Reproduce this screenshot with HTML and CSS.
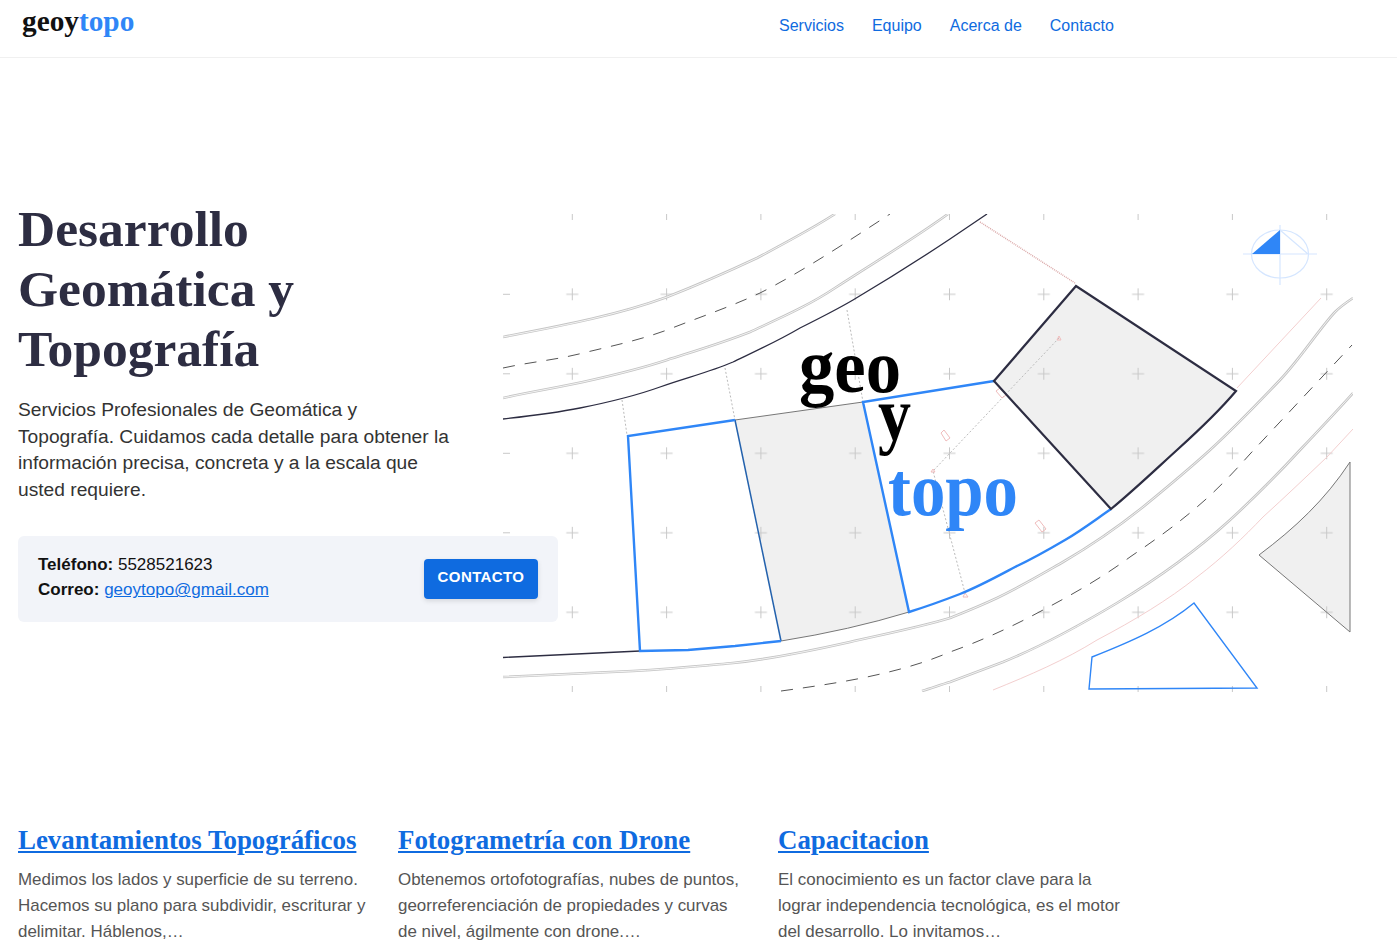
FILE: index.html
```html
<!DOCTYPE html>
<html>
<head>
    <title>geoytopo</title>
    <link rel="stylesheet" href="styles.css">
</head>
<body>
    <header class="header">
        <a class="logo" href="#">geoy<span class="logo-blue">topo</span></a>
        <nav class="nav">
            <a href="#">Servicios</a>
            <a href="#">Equipo</a>
            <a href="#">Acerca de</a>
            <a href="#">Contacto</a>
        </nav>
    </header>

    <section class="hero">
        <div class="hero-text">
            <h1>Desarrollo Geomática y Topografía</h1>
            <p class="lead">Servicios Profesionales de Geomática y Topografía. Cuidamos cada detalle para obtener la información precisa, concreta y a la escala que usted requiere.</p>
            <div class="contact-card">
                <div class="contact-info">
                    <div><b>Teléfono:</b> 5528521623</div>
                    <div><b>Correo:</b> <a href="#">geoytopo@gmail.com</a></div>
                </div>
                <a class="btn" href="#">CONTACTO</a>
            </div>
        </div>

        <svg class="plan" viewBox="503 214 850 478" width="850" height="478">
            <defs>
                <pattern id="crosses" patternUnits="userSpaceOnUse" x="525.15" y="254.55" width="94.3" height="79.5">
                    <path class="cross" d="M41.15 39.75H53.15M47.15 33.75V45.75"/>
                </pattern>
            </defs>

            <!-- filled lots -->
            <path class="lot-fill" d="M735 420L863 402L909 612Q850 630 781 641Z"/>
            <path class="lot-fill" d="M1076 286L1236 391L1177 450L1111 509L994 381Z"/>
            <path class="lot-fill" d="M1350 462C1325 500 1295 528 1259 555L1350 632Z"/>

            <!-- survey grid -->
            <rect fill="url(#crosses)" x="503" y="280" width="850" height="345"/>
            <path class="cross" d="M503 294.3H510M503 373.8H510M503 453.3H510M503 532.8H510M503 612.3H510"/>
            <path class="cross" d="M572.3 214V220M666.6 214V220M760.9 214V220M855.2 214V220M949.5 214V220M1043.8 214V220M1138.1 214V220M1232.4 214V220M1326.7 214V220"/>
            <path class="cross" d="M572.3 686V692M666.6 686V692M760.9 686V692M855.2 686V692M949.5 686V692M1043.8 686V692M1138.1 686V692M1232.4 686V692M1326.7 686V692"/>

            <!-- roads -->
            <g class="road">
                <path d="M503 337C560 326 615 316 667 297C700 284 725 273 757 258C785 243 810 230 835 214"/>
                <path d="M503 398C530 392 555 388 583 382C610 376 640 369 667 360C695 351 722 343 750 332C780 318 808 306 835 288C875 262 912 240 948 214"/>
                <path d="M503 677C550 675 590 673 633 671C670 669 700 666 733 663C770 659 810 651 850 642C885 634 920 627 950 618C965 612 980 606 997 598C1020 587 1042 574 1063 562C1092 545 1118 527 1143 507C1165 489 1188 470 1210 450C1235 427 1258 403 1280 380C1300 359 1320 328 1335 312C1341 306 1347 302 1353 298"/>
                <path d="M922 691C932 688 940 685 950 682L1003 662C1045 645 1082 624 1117 603C1160 577 1197 550 1230 520C1255 497 1278 474 1300 450C1318 431 1336 412 1353 393"/>
            </g>
            <g class="road-inner">
                <path d="M503 337C560 326 615 316 667 297C700 284 725 273 757 258C785 243 810 230 835 214"/>
                <path d="M503 398C530 392 555 388 583 382C610 376 640 369 667 360C695 351 722 343 750 332C780 318 808 306 835 288C875 262 912 240 948 214"/>
                <path d="M503 677C550 675 590 673 633 671C670 669 700 666 733 663C770 659 810 651 850 642C885 634 920 627 950 618C965 612 980 606 997 598C1020 587 1042 574 1063 562C1092 545 1118 527 1143 507C1165 489 1188 470 1210 450C1235 427 1258 403 1280 380C1300 359 1320 328 1335 312C1341 306 1347 302 1353 298"/>
                <path d="M922 691C932 688 940 685 950 682L1003 662C1045 645 1082 624 1117 603C1160 577 1197 550 1230 520C1255 497 1278 474 1300 450C1318 431 1336 412 1353 393"/>
            </g>
            <path class="dash" d="M503 368C530 362 556 360 583 353C612 346 640 340 667 330C700 317 730 307 760 293C800 273 850 240 890 214"/>
            <path class="dash" d="M781 691C810 687 838 683 867 677C895 671 922 664 950 652C978 642 1010 628 1043 610C1075 593 1103 577 1130 557C1155 540 1176 525 1197 507C1216 491 1234 472 1250 454L1352 345"/>
            <path class="dark-line" d="M503 419C530 416 555 413 580 408C610 402 635 396 660 387C685 378 710 372 733 362C756 351 778 341 800 328C820 318 836 310 853 300C885 281 920 259 950 239L987 214"/>
            <path class="dark-line" d="M503 657.5L640 651"/>

            <!-- pink limits -->
            <path class="pink" d="M993 690C1030 675 1065 660 1097 640C1135 620 1168 600 1197 577C1222 558 1244 537 1263 517C1285 497 1305 478 1327 457L1353 429"/>
            <path class="pink" d="M1237 388L1321 298"/>
            <path class="pink-dots" d="M980 222L1075 283"/>

            <!-- dimension lines -->
            <path class="dots" d="M622 400L627 435M725 368L735 420M847 310L863 402M1059 338L933 471L965 593"/>
            <g class="mark">
                <path d="M996 391L1000 388L1006 395L1002 398Z"/>
                <path d="M941 433L944 430L950 438L946 441Z"/>
                <path d="M1035 523L1039 520L1046 529L1042 532Z"/>
                <path d="M1057 340L1059 336L1061 340Z"/>
                <path d="M963 597L965 593L968 597Z"/>
                <path d="M931 472L933 469L935 472Z"/>
            </g>

            <!-- lot outlines -->
            <path class="thin-grey" d="M735 420L863 402"/>
            <path class="thin-grey" d="M781 641Q850 630 909 612"/>
            <path class="thin-blue-dark" d="M735 420L781 641"/>
            <path class="lot-blue" d="M735 420L628 436L640 651L688 650L735 646L781 641"/>
            <path class="lot-blue" d="M1111 509C1095 520 1082 530 1065 540C1048 550 1032 559 1015 567C998 576 980 586 960 594C942 601 925 607 909 612L863 402L994 381"/>
            <path class="lot-dark" d="M994 381L1076 286L1236 391C1220 410 1198 431 1177 450C1155 470 1133 491 1111 509Z"/>
            <path class="thin-lot" d="M1350 462C1325 500 1295 528 1259 555L1350 632Z"/>
            <path class="thin-blue" d="M1092 657C1130 642 1165 627 1194 603L1257 688L1089 689Z"/>

            <!-- north mark -->
            <g class="compass">
                <ellipse cx="1280" cy="254" rx="28.5" ry="24"/>
                <path d="M1243 254H1317M1280 225V285M1280 230L1308 254"/>
            </g>
            <path class="compass-fill" d="M1252 254L1280 230V254Z"/>

            <text class="plan-text" x="799" y="392" textLength="102" lengthAdjust="spacingAndGlyphs">geo</text>
            <text class="plan-text" x="878" y="440" textLength="33" lengthAdjust="spacingAndGlyphs">y</text>
            <text class="plan-text plan-blue" x="888" y="515" textLength="130" lengthAdjust="spacingAndGlyphs">topo</text>
        </svg>
    </section>

    <section class="services">
        <div class="service">
            <h2><a href="#">Levantamientos Topográficos</a></h2>
            <p>Medimos los lados y superficie de su terreno. Hacemos su plano para subdividir, escriturar y delimitar. Háblenos,…</p>
        </div>
        <div class="service">
            <h2><a href="#">Fotogrametría con Drone</a></h2>
            <p>Obtenemos ortofotografías, nubes de puntos, georreferenciación de propiedades y curvas de nivel, ágilmente con drone.…</p>
        </div>
        <div class="service">
            <h2><a href="#">Capacitacion</a></h2>
            <p>El conocimiento es un factor clave para la lograr independencia tecnológica, es el motor del desarrollo. Lo invitamos…</p>
        </div>
    </section>
</body>
</html>
```

FILE: styles.css
```css
html, body {
    margin: 0;
    height: 951px;
    overflow: hidden;
}
body {
    font-family: "Liberation Sans", Arial, sans-serif;
    background-color: white;
    color: #333;
}
a {
    color: #0f6be0;
}
.header {
    display: flex;
    align-items: flex-start;
    height: 57px;
    padding-left: 22px;
    border-bottom: 1px solid #f0f0f0;
}
.logo {
    width: 757px;
    font-family: "Liberation Serif", serif;
    font-weight: bold;
    font-size: 29.3px;
    line-height: 43px;
    color: #111;
    text-decoration: none;
}
.logo-blue {
    color: #2f86f7;
}
.nav {
    display: flex;
    gap: 28px;
    padding-top: 16px;
    font-size: 16px;
    line-height: 20px;
}
.nav a {
    text-decoration: none;
}
.hero {
    display: flex;
    justify-content: space-between;
    padding: 141px 44px 0 18px;
}
.hero-text {
    width: 540px;
    margin-right: -55px;
    position: relative;
    z-index: 1;
}
h1 {
    margin: 0;
    width: 320px;
    font-family: "Liberation Serif", serif;
    font-size: 51.5px;
    line-height: 60px;
    font-weight: bold;
    color: #2d2d42;
}
.lead {
    margin: 18px 0 0;
    width: 436px;
    font-size: 19.2px;
    line-height: 26.6px;
}
.contact-card {
    display: flex;
    align-items: center;
    justify-content: space-between;
    height: 86px;
    margin-top: 33px;
    padding: 0 20px;
    box-sizing: border-box;
    background-color: #f2f4f9;
    border-radius: 6px;
    color: #111;
    font-size: 17px;
    line-height: 25px;
}
.contact-info {
    padding-bottom: 4px;
}
.btn {
    width: 114px;
    height: 40px;
    line-height: 36px;
    text-align: center;
    background-color: #0f6be0;
    color: white;
    border-radius: 4px;
    font-size: 15px;
    font-weight: bold;
    letter-spacing: 0.4px;
    text-decoration: none;
    box-shadow: 0 2px 5px rgba(0,0,0,0.12);
}
.plan {
    display: block;
    flex: none;
    margin-top: 15px;
}
.services {
    display: flex;
    margin-top: 130px;
    padding-left: 18px;
}
.service {
    width: 350px;
    margin-right: 30px;
}
h2 {
    margin: 0;
    font-family: "Liberation Serif", serif;
    font-size: 26.9px;
    line-height: 36px;
    font-weight: bold;
}
.service p {
    margin: 9px 0 0;
    font-size: 16.96px;
    line-height: 26px;
    color: #555;
}

/* plan drawing */
.plan path, .plan ellipse {
    fill: none;
}
.plan .lot-fill {
    fill: #f0f0f0;
}
.plan .cross {
    stroke: #c8c8c8;
    stroke-width: 1;
}
.road path {
    stroke: #c4c4c4;
    stroke-width: 2.6;
}
.road-inner path {
    stroke: white;
    stroke-width: 0.8;
}
.plan .dash {
    stroke: #555;
    stroke-width: 1;
    stroke-dasharray: 12 10;
}
.plan .dark-line {
    stroke: #2d2d42;
    stroke-width: 1.3;
}
.plan .pink {
    stroke: #f3cfcf;
    stroke-width: 1;
}
.plan .pink-dots {
    stroke: #dba9a9;
    stroke-width: 1.5;
    stroke-dasharray: 1 1;
}
.plan .dots {
    stroke: #bbb;
    stroke-width: 1;
    stroke-dasharray: 2 2;
}
.mark path {
    stroke: #f0bcbc;
    stroke-width: 1;
}
.plan .thin-grey {
    stroke: #777;
    stroke-width: 1;
}
.plan .thin-blue-dark {
    stroke: #2462ad;
    stroke-width: 1.5;
}
.plan .lot-blue {
    stroke: #2f86f7;
    stroke-width: 2.4;
}
.plan .lot-dark {
    stroke: #2d2d42;
    stroke-width: 2.2;
}
.plan .thin-lot {
    stroke: #777;
    stroke-width: 1;
}
.plan .thin-blue {
    stroke: #2f86f7;
    stroke-width: 1.4;
}
.compass ellipse, .compass path {
    stroke: #d5e6ff;
    stroke-width: 1.2;
}
.plan .compass-fill {
    fill: #2f86f7;
}
.plan-text {
    font-family: "Liberation Serif", serif;
    font-weight: bold;
    font-size: 76px;
    fill: black;
}
.plan-blue {
    fill: #2f86f7;
}
```
